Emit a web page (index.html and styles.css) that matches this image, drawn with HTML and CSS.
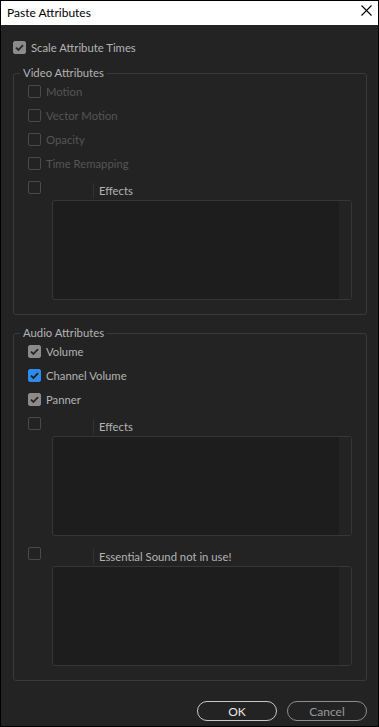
FILE: index.html
```html
<!DOCTYPE html>
<html lang="en">

<head>
    <title>Paste Attributes</title>
    <link rel="stylesheet" href="styles.css">
</head>

<body>
    <div class="window">
        <div class="titlebar">
            <span class="title">Paste Attributes</span>
            <svg class="close" width="11" height="11" viewBox="0 0 11 11">
                <path d="M0.5 0.5 L10.5 10.5 M10.5 0.5 L0.5 10.5" stroke="#000" stroke-width="1.1" fill="none" />
            </svg>
        </div>

        <div class="content">
            <div class="row">
                <span class="cb cb-grey">
                    <svg width="13" height="13" viewBox="0 0 13 13"><path d="M3 6.6 L5.4 9 L10 4.2" /></svg>
                </span>
                <span class="label">Scale Attribute Times</span>
            </div>

            <fieldset class="group">
                <legend>Video Attributes</legend>
                <div class="row disabled"><span class="cb"></span><span class="label">Motion</span></div>
                <div class="row disabled"><span class="cb"></span><span class="label">Vector Motion</span></div>
                <div class="row disabled"><span class="cb"></span><span class="label">Opacity</span></div>
                <div class="row disabled"><span class="cb"></span><span class="label">Time Remapping</span></div>
                <div class="list-head">
                    <span class="cb"></span>
                    <span class="head-label">Effects</span>
                </div>
                <div class="list-box"><div class="track"></div></div>
            </fieldset>

            <fieldset class="group audio">
                <legend>Audio Attributes</legend>
                <div class="row">
                    <span class="cb cb-grey">
                        <svg width="13" height="13" viewBox="0 0 13 13"><path d="M3 6.6 L5.4 9 L10 4.2" /></svg>
                    </span>
                    <span class="label">Volume</span>
                </div>
                <div class="row">
                    <span class="cb cb-blue">
                        <svg width="13" height="13" viewBox="0 0 13 13"><path d="M3 6.6 L5.4 9 L10 4.2" /></svg>
                    </span>
                    <span class="label">Channel Volume</span>
                </div>
                <div class="row">
                    <span class="cb cb-grey">
                        <svg width="13" height="13" viewBox="0 0 13 13"><path d="M3 6.6 L5.4 9 L10 4.2" /></svg>
                    </span>
                    <span class="label">Panner</span>
                </div>
                <div class="list-head">
                    <span class="cb"></span>
                    <span class="head-label">Effects</span>
                </div>
                <div class="list-box"><div class="track"></div></div>
                <div class="list-head spaced">
                    <span class="cb"></span>
                    <span class="head-label">Essential Sound not in use!</span>
                </div>
                <div class="list-box"><div class="track"></div></div>
            </fieldset>

            <div class="buttons">
                <button class="btn btn-ok">OK</button>
                <button class="btn">Cancel</button>
            </div>
        </div>
    </div>
</body>

</html>
```

FILE: styles.css
```css
:root {
    --bg-color: #232323;
    --font-color: #b4b4b4;
    --dim-color: #555;
    --line-color: #3a3a3a;
}

body {
    margin: 0;
    padding: 0;
    background-color: #000;
    font-family: Lato, 'Open Sans', sans-serif;
    font-size: 11.3px;
}

.window {
    width: 379px;
    height: 727px;
    box-sizing: border-box;
    border: 1px solid #000;
    background-color: var(--bg-color);
    display: flex;
    flex-direction: column;
}

.titlebar {
    height: 24px;
    background: #fff;
    display: flex;
    align-items: center;
    justify-content: space-between;
    padding: 0 6px 0 6px;
}

.title {
    color: #000;
    font-size: 12px;
    margin-bottom: 1px;
}

.close {
    margin-bottom: 5px;
}

.content {
    display: flex;
    flex-direction: column;
    padding: 10px 11px 5px 12px;
    flex: 1;
}

.row {
    display: flex;
    align-items: center;
    height: 24px;
    color: var(--font-color);
}

.row.disabled {
    color: var(--dim-color);
}

.label {
    margin-left: 5px;
}

.cb {
    width: 13px;
    height: 13px;
    box-sizing: border-box;
    border: 1px solid #4a4a4a;
    border-radius: 2px;
    flex-shrink: 0;
}

.cb svg {
    display: block;
    margin: -1px;
}

.cb path {
    fill: none;
    stroke: #262626;
    stroke-width: 1.8;
}

.cb-grey {
    background: #8b8b8b;
    border-color: #8b8b8b;
}

.cb-blue {
    background: #2d8ceb;
    border-color: #2d8ceb;
}

.cb-blue path {
    stroke: #1b1b1b;
}

.group {
    margin: 8px 0 0 0;
    padding: 0 14px 14px 14px;
    border: 1px solid var(--line-color);
    border-radius: 3px;
    min-width: 0;
}

.group.audio {
    margin-top: 12px;
}

.group legend {
    color: var(--font-color);
    line-height: 12px;
    padding: 0 3px;
    margin-left: -8px;
}

.list-head {
    display: flex;
    align-items: flex-start;
    height: 25px;
    color: var(--font-color);
}

.list-head .cb {
    margin-top: 6px;
}

.list-head.spaced {
    margin-top: 5px;
}

.head-label {
    margin-left: 52px;
    margin-top: 8px;
    height: 15px;
    line-height: 15px;
    border-left: 1px solid #333;
    padding-left: 5px;
}

.list-box {
    margin-left: 24px;
    width: 300px;
    height: 100px;
    box-sizing: border-box;
    border: 1px solid #363636;
    border-radius: 3px;
    background: #1d1d1d;
    display: flex;
    justify-content: flex-end;
}

.track {
    width: 12px;
    background: #232323;
    border-radius: 0 2px 2px 0;
}

.buttons {
    display: flex;
    justify-content: flex-end;
    gap: 10px;
    margin-top: 20px;
}

.btn {
    width: 80px;
    height: 20px;
    padding: 0;
    border: 1px solid #8d8d8d;
    border-radius: 10px;
    background: transparent;
    color: #9a9a9a;
    font-family: Lato, 'Open Sans', sans-serif;
    font-size: 12px;
}

.btn-ok {
    border-color: #c9c9c9;
    color: #e6e6e6;
}
```
